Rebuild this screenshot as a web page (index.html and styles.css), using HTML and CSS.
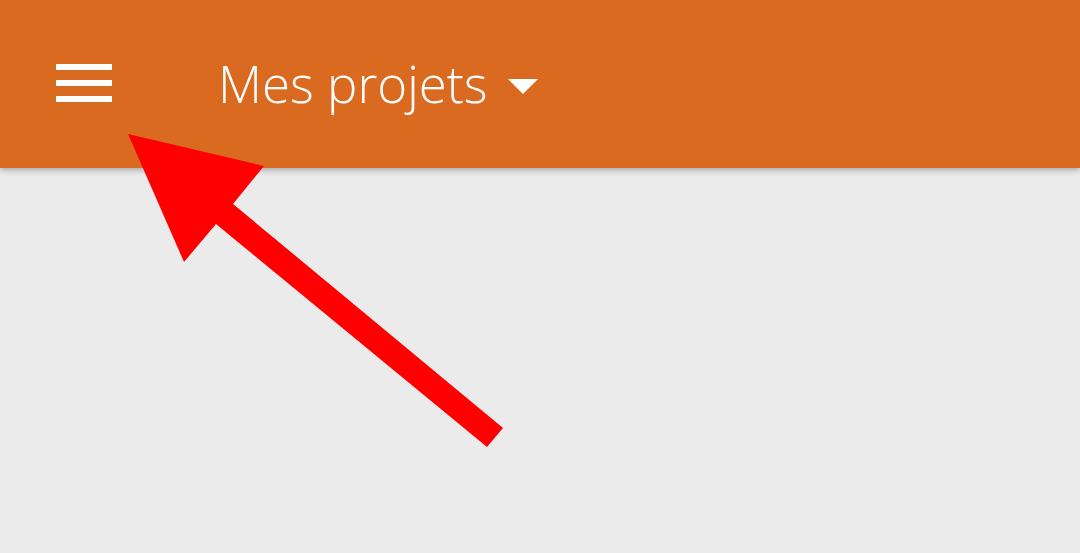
FILE: index.html
```html
<!DOCTYPE html>
<html lang="fr">
<head>
    <meta charset="UTF-8">
    <meta name="viewport" content="width=device-width, initial-scale=1.0">
    <title>Mes projets</title>
    <link rel="stylesheet" href="styles.css">
</head>
<body>
    <header class="app-bar">
        <button class="menu-btn" aria-label="Menu">
            <span></span>
            <span></span>
            <span></span>
        </button>
        <div class="title">
            <span class="title-text">Mes projets</span>
            <span class="caret"></span>
        </div>
    </header>
    <main class="content"></main>
    <svg class="pointer" width="1080" height="553" viewBox="0 0 1080 553">
        <polygon points="128,134 264,166 233,204 503,428 487,447 216,224 184,262" fill="#ff0000"/>
    </svg>
</body>
</html>
```

FILE: styles.css
```css
body {
    margin: 0;
    padding: 0;
    background-color: #ebebeb;
    font-family: "Open Sans", Arial, sans-serif;
    height: 553px;
    overflow: hidden;
}
.app-bar {
    display: flex;
    align-items: flex-start;
    height: 168px;
    box-sizing: border-box;
    padding: 64px 0 0 56px;
    background-color: #db6a21;
    box-shadow: 0 2px 6px rgba(0, 0, 0, 0.3);
    position: relative;
    z-index: 1;
}
.menu-btn {
    display: flex;
    flex-direction: column;
    gap: 10px;
    width: 56px;
    padding: 0;
    border: none;
    background: none;
}
.menu-btn span {
    display: block;
    width: 56px;
    height: 6px;
    background: #fff;
}
.title {
    display: flex;
    align-items: center;
    margin-left: 106px;
    margin-top: -17px;
}
.title-text {
    color: #fff;
    font-weight: 300;
    font-size: 51px;
    line-height: 72px;
}
.caret {
    width: 0;
    height: 0;
    margin-left: 20px;
    margin-top: 6px;
    border-left: 15px solid transparent;
    border-right: 15px solid transparent;
    border-top: 15px solid #fff;
}
.content {
    height: 385px;
}
.pointer {
    position: absolute;
    top: 0;
    left: 0;
    z-index: 2;
}
```
